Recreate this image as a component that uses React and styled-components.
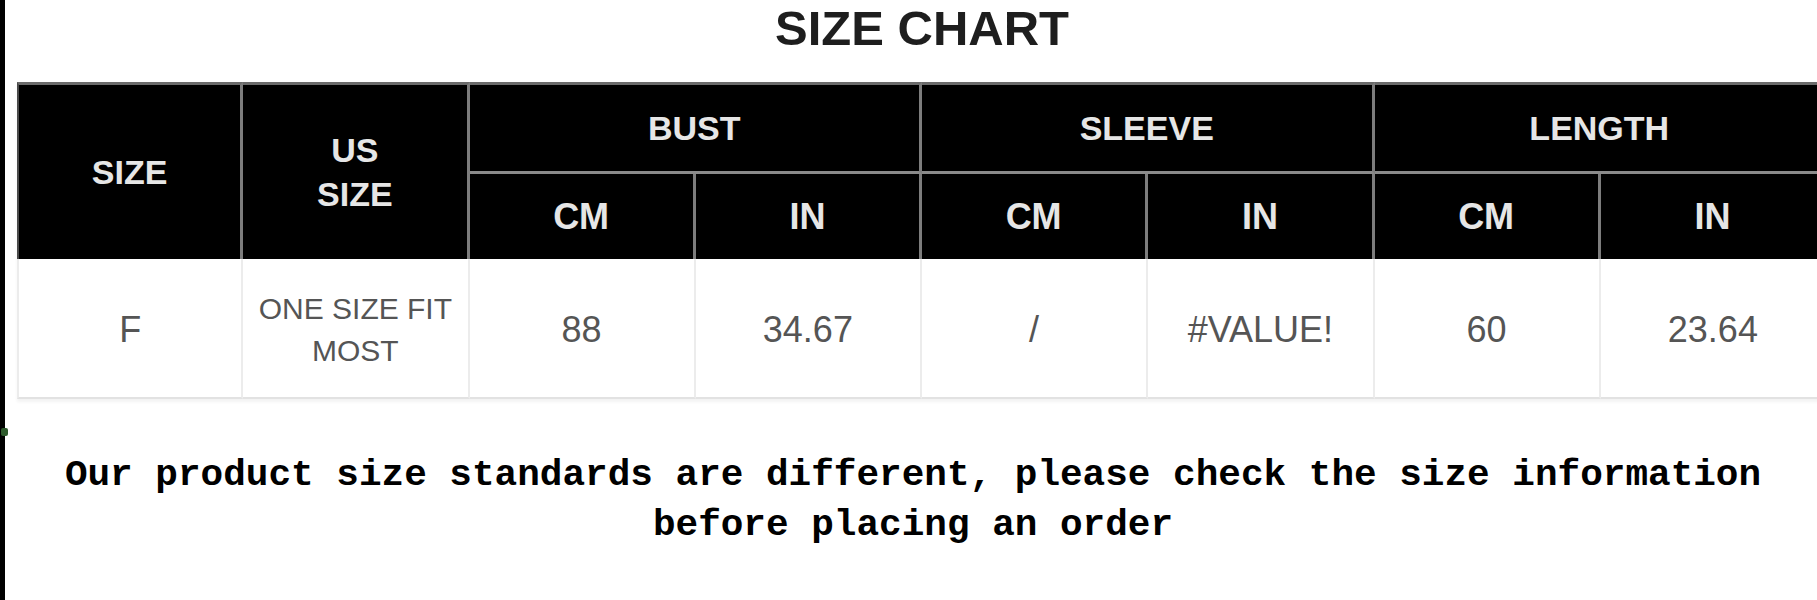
import React from 'react'
import styled, { createGlobalStyle } from 'styled-components'

const GlobalStyle = createGlobalStyle`
  html, body {
    margin: 0;
    padding: 0;
    background: #fff;
    overflow: hidden;
  }
`

const groups = [
  { name: 'BUST', cm: '88', inch: '34.67' },
  { name: 'SLEEVE', cm: '/', inch: '#VALUE!' },
  { name: 'LENGTH', cm: '60', inch: '23.64' },
]

const SizeChart = () => {
  return (
    <Page>
      <GlobalStyle />
      <EdgeStrip />
      <Content>
        <Sheet>
          <Title>SIZE CHART</Title>
          <Table>
            <thead>
              <tr>
                <HeadCell rowSpan={2} $first $top>SIZE</HeadCell>
                <HeadCell rowSpan={2} $top>
                  US
                  <br />
                  SIZE
                </HeadCell>
                {groups.map((g) => (
                  <HeadCell key={g.name} colSpan={2} $top $group>
                    {g.name}
                  </HeadCell>
                ))}
              </tr>
              <tr>
                {groups.map((g) => (
                  <React.Fragment key={g.name}>
                    <SubCell>CM</SubCell>
                    <SubCell>IN</SubCell>
                  </React.Fragment>
                ))}
              </tr>
            </thead>
            <tbody>
              <tr>
                <BodyCell $first>F</BodyCell>
                <BodyCell $small>
                  ONE SIZE FIT
                  <br />
                  MOST
                </BodyCell>
                {groups.map((g) => (
                  <React.Fragment key={g.name}>
                    <BodyCell>{g.cm}</BodyCell>
                    <BodyCell>{g.inch}</BodyCell>
                  </React.Fragment>
                ))}
              </tr>
            </tbody>
          </Table>
        </Sheet>
        <Note>
          Our product size standards are different, please check the size information
          <br />
          before placing an order
        </Note>
      </Content>
    </Page>
  )
}

export default SizeChart

const Page = styled.div`
  display: flex;
  width: 1817px;
  height: 600px;
  overflow: hidden;
  background: #fff;
`

const EdgeStrip = styled.div`
  position: relative;
  flex: 0 0 5px;
  background: #000;

  &::after {
    content: '';
    position: absolute;
    left: 1px;
    top: 428px;
    width: 7px;
    height: 8px;
    background: #2e5a2c;
    border-radius: 2px;
  }
`

const Content = styled.div`
  flex: 1;
  min-width: 0;
  overflow: hidden;
  padding-left: 12px;
  display: flex;
  flex-direction: column;
`

const Sheet = styled.div`
  width: 1810px;
  display: flex;
  flex-direction: column;
`

const Title = styled.div`
  margin: 0 0 26px;
  text-align: center;
  font: 700 49px/56px "Liberation Sans", Arial, sans-serif;
  color: #1e1e1e;
`

const Table = styled.table`
  width: 1810px;
  table-layout: fixed;
  border-collapse: separate;
  border-spacing: 0;
  box-shadow: 0 3px 3px rgba(0, 0, 0, 0.05);
`

const HeadCell = styled.th`
  box-sizing: border-box;
  padding: 0;
  height: ${(p) => (p.$group ? '92px' : 'auto')};
  background: #000;
  color: #e6e6e6;
  font: 700 34px/44px "Liberation Sans", Arial, sans-serif;
  text-align: center;
  vertical-align: middle;
  border-top: ${(p) => (p.$top ? '3px solid #6b6b6b' : '0')};
  border-bottom: ${(p) => (p.$group ? '3px solid #8a8a8a' : '0')};
  border-right: 3px solid #7d7d7d;
  border-left: ${(p) => (p.$first ? '2px solid #4a4a4a' : '0')};
`

const SubCell = styled.th`
  box-sizing: border-box;
  padding: 0;
  height: 85px;
  background: #000;
  color: #e6e6e6;
  font: 700 36px/44px "Liberation Sans", Arial, sans-serif;
  text-align: center;
  vertical-align: middle;
  border-right: 3px solid #7d7d7d;
`

const BodyCell = styled.td`
  box-sizing: border-box;
  padding: 4px 0 0;
  height: 140px;
  background: #fff;
  color: #555;
  font: 400 ${(p) => (p.$small ? '30px/42px' : '36px/44px')} "Liberation Sans", Arial, sans-serif;
  text-align: center;
  vertical-align: middle;
  border-right: 2px solid #ececec;
  border-bottom: 2px solid #e2e2e2;
  border-left: ${(p) => (p.$first ? '2px solid #ececec' : '0')};
`

const Note = styled.div`
  width: 1792px;
  margin-top: 51px;
  text-align: center;
  font: 700 37.7px/50px "Liberation Mono", "Courier New", monospace;
  color: #000;
`
